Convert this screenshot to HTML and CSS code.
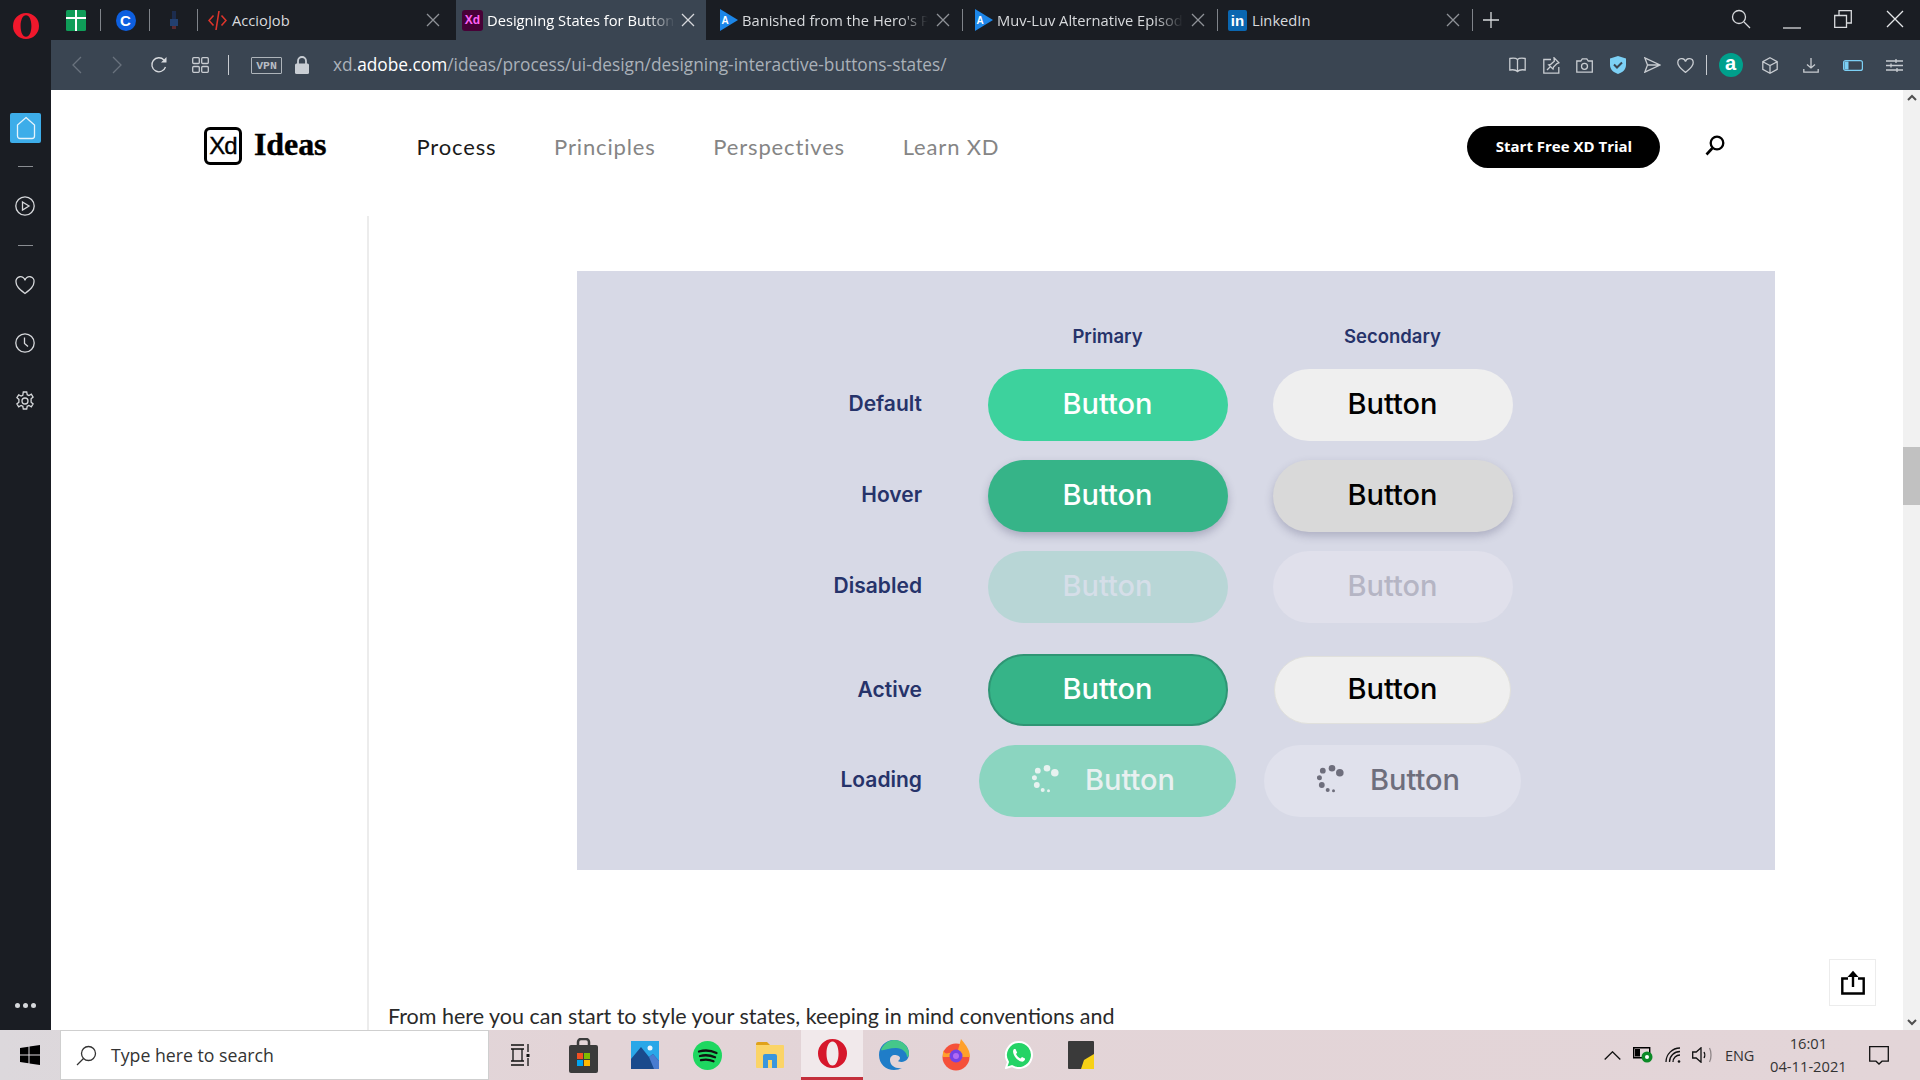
FILE: index.html
```html
<!DOCTYPE html>
<html lang="en">
<head>
<meta charset="utf-8">
<title>Designing States for Buttons</title>
<link rel="stylesheet" href="styles.css">
</head>
<body>
<div class="upper">
  <aside class="sidebar">
    <svg class="opera-logo" width="26" height="26" viewBox="0 0 26 26"><path fill="#f0182c" fill-rule="evenodd" d="M13 0a13 13 0 1 1 0 26a13 13 0 0 1 0-26zM13 2.2c-3.3 0-5.4 4.6-5.4 10.8S9.700 23.800 13 23.800 18.400 19.200 18.400 13 16.300 2.200 13 2.200z"/></svg>
    <div class="side-home"><svg class="ic" width="20" height="24" viewBox="0 0 20 24"><path d="M10 1.500L18.500 9v11a2.500 2.500 0 0 1-2.500 2.500H4A2.500 2.500 0 0 1 1.500 20V9z"/></svg></div>
    <div class="side-rule rule-a"></div>
    <svg class="ic side-play" width="20" height="20" viewBox="0 0 20 20"><circle cx="10" cy="10" r="9.200"/><path d="M7.500 6l6.500 4-6.500 4z"/></svg>
    <div class="side-rule rule-b"></div>
    <svg class="ic side-heart" width="20" height="20" viewBox="0 0 20 20"><path d="M10 18.500C5 14.500 1 11.500 1 7a4.500 4.500 0 0 1 9-1.500A4.500 4.500 0 0 1 19 7c0 4.500-4 7.500-9 11.500z"/></svg>
    <svg class="ic side-clock" width="20" height="20" viewBox="0 0 20 20"><circle cx="10" cy="10" r="9.200"/><path d="M9.500 4.500v6l3.500 3"/></svg>
    <svg class="ic side-gear" width="20" height="20" viewBox="0 0 20 20"><circle cx="10" cy="10" r="3"/><path d="M8.300 1h3.400l.5 2.700 1.700.8 2.400-1.300 1.800 2.900-2 1.700v3.400l2 1.700-1.800 2.900-2.400-1.300-1.700.8-.5 2.700H8.300l-.5-2.700-1.700-.8-2.400 1.300-1.800-2.900 2-1.700V8.400l-2-1.700 1.800-2.900 2.400 1.300 1.700-.8z"/></svg>
    <div class="side-dots"><i></i><i></i><i></i></div>
  </aside>

  <div class="browser">
    <div class="tabbar">
      <div class="pin pin-a"><svg width="20" height="21" viewBox="0 0 20 21"><rect width="20" height="21" rx="1.500" fill="#0f9d58"/><path d="M9 0h2v7h9v2h-9v12H9V9H0V7h9z" fill="#fff"/></svg></div>
      <span class="sep"></span>
      <div class="pin pin-b"><span class="ico-c">C</span></div>
      <span class="sep"></span>
      <div class="pin pin-c"><svg width="8" height="18" viewBox="0 0 8 18"><rect x="2" y="0" width="4" height="9" fill="#1c2c4e"/><rect x="0" y="8" width="8" height="7" fill="#23406f"/><rect x="2" y="15" width="4" height="3" fill="#5a2a30"/></svg></div>
      <span class="sep"></span>
      <div class="tab tab-accio"><svg class="ico-code" width="19" height="21" viewBox="0 0 19 21"><path d="M5.500 5.500L1 10.500l4.500 5M13.500 5.500L18 10.500l-4.500 5M11 1L8 20" fill="none" stroke="#dd352c" stroke-width="1.600"/></svg><span class="tab-title">AccioJob</span><svg class="ic close" width="14" height="14" viewBox="0 0 14 14"><path d="M1 1l12 12M13 1L1 13"/></svg></div>
      <div class="tab tab-active"><span class="ico-xd">Xd</span><span class="tab-title fade">Designing States for Button</span><svg class="ic close" width="14" height="14" viewBox="0 0 14 14"><path d="M1 1l12 12M13 1L1 13"/></svg></div>
      <div class="tab tab-hero"><svg class="ico-ani" width="18" height="22" viewBox="0 0 18 22"><path d="M0 0l18 11L0 22z" fill="#1c86e8"/><text x="1.500" y="15" class="ani-letter">A</text></svg><span class="tab-title fade">Banished from the Hero's P</span><svg class="ic close" width="14" height="14" viewBox="0 0 14 14"><path d="M1 1l12 12M13 1L1 13"/></svg></div>
      <span class="sep"></span>
      <div class="tab tab-muv"><svg class="ico-ani" width="18" height="22" viewBox="0 0 18 22"><path d="M0 0l18 11L0 22z" fill="#1c86e8"/><text x="1.500" y="15" class="ani-letter">A</text></svg><span class="tab-title fade">Muv-Luv Alternative Episod</span><svg class="ic close" width="14" height="14" viewBox="0 0 14 14"><path d="M1 1l12 12M13 1L1 13"/></svg></div>
      <span class="sep"></span>
      <div class="tab tab-in"><span class="ico-in">in</span><span class="tab-title">LinkedIn</span><svg class="ic close" width="14" height="14" viewBox="0 0 14 14"><path d="M1 1l12 12M13 1L1 13"/></svg></div>
      <span class="sep"></span>
      <svg class="ic tab-plus" width="16" height="16" viewBox="0 0 16 16"><path d="M8 0v16M0 8h16"/></svg>
      <svg class="ic win-search" width="20" height="20" viewBox="0 0 20 20"><circle cx="8" cy="8" r="6.500"/><path d="M13 13l6 6"/></svg>
      <svg class="ic win-min" width="18" height="18" viewBox="0 0 18 18"><path d="M0 17h18"/></svg>
      <svg class="ic win-max" width="18" height="18" viewBox="0 0 18 18"><path d="M.700 5.500h11.800v11.800H.700zM5 5.500V.700h12.300v12.300h-4.800"/></svg>
      <svg class="ic win-close" width="18" height="18" viewBox="0 0 18 18"><path d="M1 1l16 16M17 1L1 17"/></svg>
    </div>

    <div class="toolbar">
      <svg class="ic tb tb-back" width="12" height="18" viewBox="0 0 12 18"><path d="M10 1L2 9l8 8"/></svg>
      <svg class="ic tb tb-fwd" width="12" height="18" viewBox="0 0 12 18"><path d="M2 1l8 8-8 8"/></svg>
      <svg class="ic tb tb-reload" width="18" height="18" viewBox="0 0 18 18"><path d="M15.500 11a7 7 0 1 1-1.500-7"/><path class="solid" d="M16.500 1v5.500H11z"/></svg>
      <svg class="ic tb tb-grid" width="17" height="16" viewBox="0 0 17 16"><rect x=".700" y=".700" width="6.600" height="5.800" rx="1"/><rect x="9.700" y=".700" width="6.600" height="5.800" rx="1"/><rect x=".700" y="9.500" width="6.600" height="5.800" rx="1"/><rect x="9.700" y="9.500" width="6.600" height="5.800" rx="1"/></svg>
      <span class="tb-sep"></span>
      <span class="vpn">VPN</span>
      <svg class="tb-lock" width="14" height="18" viewBox="0 0 14 18"><path d="M3 8V5a4 4 0 0 1 8 0v3" fill="none" stroke="#c9ced4" stroke-width="1.800"/><rect y="7.500" width="14" height="10.500" rx="1.500" fill="#c9ced4"/></svg>
      <div class="url">xd.<b>adobe.com</b>/ideas/process/ui-design/designing-interactive-buttons-states/</div>
      <div class="tb-right">
        <svg class="ic" width="17" height="16" viewBox="0 0 17 16"><path d="M8.500 2.500C7 1 4 1 .8 1.500v11.500c3-.5 6-.5 7.700 1.500 1.700-2 4.700-2 7.700-1.500V1.500C13 1 10 1 8.500 2.500zM8.500 2.500v12"/></svg>
        <svg class="ic" width="17" height="17" viewBox="0 0 17 17"><path d="M8 2.500H.8v13.700h15V10"/><path d="M11 .8l5 5-2 .8-3.500 3.500-.5 2-4.300-4.300 2-.5L11.300 4.300zM7.500 9.500l-3.500 3.500"/></svg>
        <svg class="ic" width="17" height="15" viewBox="0 0 17 15"><path d="M.8 3h4l1.500-2.200h4.500L12.300 3h4v11.200H.8z"/><circle cx="8.500" cy="8.300" r="3"/></svg>
        <svg width="16" height="18" viewBox="0 0 16 18"><path d="M8 0l8 2.500V9c0 4.500-3.500 7.500-8 9-4.500-1.500-8-4.500-8-9V2.500z" fill="#7cd0f5"/><path d="M4 8.500l3 3 5-5" fill="none" stroke="#3a4552" stroke-width="2"/></svg>
        <svg class="ic" width="17" height="16" viewBox="0 0 17 16"><path d="M.8 .8L16 8 .8 15.200 3.500 8zM3.500 8H16"/></svg>
        <svg class="ic" width="17" height="15" viewBox="0 0 17 15"><path d="M8.500 14.500C4.500 11 .8 8.500 .8 4.700a3.900 3.900 0 0 1 7.700-1 3.900 3.900 0 0 1 7.700 1c0 3.800-3.700 6.300-7.700 9.800z"/></svg>
        <span class="tb-sep"></span>
        <span class="ico-a">a</span>
        <svg class="ic" width="16" height="17" viewBox="0 0 16 17"><path d="M8 .8l7.200 3.900v7.600L8 16.200 .8 12.300V4.700zM.8 4.700L8 8.500l7.200-3.800M8 8.500v7.700"/></svg>
        <svg class="ic" width="16" height="16" viewBox="0 0 16 16"><path d="M8 1v10M4 7.500L8 11l4-3.500M.8 12v3.200h14.400V12"/></svg>
        <svg width="20" height="11" viewBox="0 0 20 11"><rect x=".6" y=".6" width="18.800" height="9.800" rx="2" fill="none" stroke="#7cd0f5" stroke-width="1.200"/><rect x="1.500" y="1.500" width="4" height="8" fill="#7cd0f5"/></svg>
        <svg class="ic" width="17" height="15" viewBox="0 0 17 15"><path d="M0 3h17M0 7.500h17M0 12h17M10 1v4M5 5.500v4M11 10v4"/></svg>
      </div>
    </div>

    <div class="viewport">
      <main class="page">
        <header class="nav">
          <a class="logo"><span class="logo-box">Xd</span><span class="logo-name">Ideas</span></a>
          <nav class="links">
            <span class="link current">Process</span>
            <span class="link">Principles</span>
            <span class="link">Perspectives</span>
            <span class="link">Learn XD</span>
          </nav>
          <span class="cta">Start Free XD Trial</span>
          <svg class="nav-search" width="20" height="21" viewBox="0 0 20 21"><circle cx="12" cy="8" r="6.300" fill="none" stroke="#000" stroke-width="2.300"/><path d="M7.500 13L1.500 19.500" stroke="#000" stroke-width="2.600" fill="none"/></svg>
        </header>
        <article class="article">
          <figure class="panel">
            <span></span><span class="col-head">Primary</span><span class="col-head">Secondary</span>
            <span class="row-label">Default</span><span class="btn p-default">Button</span><span class="btn s-default">Button</span>
            <span class="row-label">Hover</span><span class="btn p-hover">Button</span><span class="btn s-hover">Button</span>
            <span class="row-label">Disabled</span><span class="btn p-disabled">Button</span><span class="btn s-disabled">Button</span>
            <span class="row-label">Active</span><span class="btn p-active">Button</span><span class="btn s-active">Button</span>
            <span class="row-label">Loading</span>
            <span class="btn loading p-loading"><svg width="27" height="28" viewBox="0 0 27 28"><g fill="#e8f2f0"><circle cx="22.800" cy="7.700" r="3.800"/><circle cx="15" cy="3.300" r="3.300"/><circle cx="5.800" cy="5.700" r="2.900"/><circle cx="2.400" cy="12.700" r="2.500"/><circle cx="4.800" cy="20" r="2.900"/><circle cx="10.700" cy="25" r="2"/><circle cx="16.500" cy="25.700" r="1.500"/></g></svg>Button</span>
            <span class="btn loading s-loading"><svg width="27" height="28" viewBox="0 0 27 28"><g fill="#6e6e7c"><circle cx="22.800" cy="7.700" r="3.800"/><circle cx="15" cy="3.300" r="3.300"/><circle cx="5.800" cy="5.700" r="2.900"/><circle cx="2.400" cy="12.700" r="2.500"/><circle cx="4.800" cy="20" r="2.900"/><circle cx="10.700" cy="25" r="2"/><circle cx="16.500" cy="25.700" r="1.500"/></g></svg>Button</span>
          </figure>
          <p class="body-text">From here you can start to style your states, keeping in mind conventions and</p>
        </article>
        <div class="share"><svg width="24" height="25" viewBox="0 0 24 25"><path d="M7 8.500H1.300v15h21.400v-15H17" fill="none" stroke="#000" stroke-width="2.400"/><path d="M12 17V3" stroke="#000" stroke-width="2.400"/><path d="M6.500 7L12 .8 17.500 7z" fill="#000"/></svg></div>
      </main>
      <div class="scrollbar">
        <svg class="sb-arrow" width="10" height="7" viewBox="0 0 10 7"><path d="M1 6l4-4 4 4" fill="none" stroke="#505050" stroke-width="2"/></svg>
        <div class="sb-thumb"></div>
        <svg class="sb-arrow sb-down" width="10" height="7" viewBox="0 0 10 7"><path d="M1 1l4 4 4-4" fill="none" stroke="#505050" stroke-width="2"/></svg>
      </div>
    </div>
  </div>
</div>

<footer class="taskbar">
  <svg class="win-logo" width="20" height="20" viewBox="0 0 20 20"><path d="M0 3l8.500-1.300v7.800H0zM9.500 1.500L20 0v9.500H9.500zM0 10.500h8.500v7.800L0 17zM9.500 10.500H20V20L9.500 18.500z" fill="#000"/></svg>
  <div class="searchbox">
    <svg class="ic" width="21" height="21" viewBox="0 0 21 21"><circle cx="12.500" cy="8.500" r="7"/><path d="M7.500 13.500L1 20"/></svg>
    <span>Type here to search</span>
  </div>
  <div class="apps">
    <div class="app"><svg class="ic dark" width="20" height="22" viewBox="0 0 20 22"><path d="M0 1h13M0 21h13M0 17h13M2 5h9v12H2zM0 5h13M17 0v8M17 14v8"/><path d="M15.500 10h3v3h-3z" class="solid"/></svg></div>
    <div class="app"><svg width="29" height="35" viewBox="0 0 29 35"><path d="M9 8V4a3 3 0 0 1 3-3h5a3 3 0 0 1 3 3v4" fill="none" stroke="#3b3b3b" stroke-width="2.500"/><rect y="7" width="29" height="28" rx="2" fill="#3b3b3b"/><rect x="8" y="15" width="6" height="6" fill="#f25022"/><rect x="15" y="15" width="6" height="6" fill="#7fba00"/><rect x="8" y="22" width="6" height="6" fill="#00a4ef"/><rect x="15" y="22" width="6" height="6" fill="#ffb900"/></svg></div>
    <div class="app"><svg width="28" height="28" viewBox="0 0 28 28"><rect width="28" height="28" fill="#2aa7e8"/><circle cx="19" cy="7" r="2.500" fill="#e8f6ff"/><path d="M0 28V18L10 6l8 10 4-3 6 7v8z" fill="#1a4a8c"/><path d="M18 16l4-3 6 7v8h-5z" fill="#4a7cd0"/></svg></div>
    <div class="app"><svg width="29" height="29" viewBox="0 0 29 29"><circle cx="14.500" cy="14.500" r="14.500" fill="#1ed760"/><path d="M6 10.500c6-1.700 12-1.200 17.500 1.500M7 15c5-1.300 10-1 15 1.300M8 19.200c4-1 8.500-.8 12.500 1.100" fill="none" stroke="#111" stroke-width="2.300" stroke-linecap="round"/></svg></div>
    <div class="app"><svg width="28" height="26" viewBox="0 0 28 26"><path d="M0 2a2 2 0 0 1 2-2h9l3 3H0z" fill="#e0a21b"/><rect y="3" width="28" height="23" rx="1" fill="#fbd467"/><path d="M7 26V14a2 2 0 0 1 2-2h10a2 2 0 0 1 2 2v12h-5v-8h-4v8z" fill="#3a96dd"/></svg></div>
    <div class="app app-active"><svg width="29" height="29" viewBox="0 0 26 26"><path fill="#d6172b" fill-rule="evenodd" d="M13 0a13 13 0 1 1 0 26a13 13 0 0 1 0-26zM13 2.200c-3.300 0-5.400 4.600-5.400 10.800S9.700 23.800 13 23.800 18.400 19.200 18.400 13 16.300 2.200 13 2.200z"/></svg></div>
    <div class="app"><svg width="30" height="30" viewBox="0 0 30 30"><path d="M15 0C6 0 0 7 0 15c0 9 7 15 15 15 3 0 6-1 8-2-6 1-12-2-12-8 0-3 2-5 5-5 2 0 5 1 5 3s-2 3-2 3 3 2 7 0 4-6 4-8C30 6 23 0 15 0z" fill="#1f7dc8"/><path d="M2 10c2-6 8-10 13-10 8 0 15 6 15 14 0 2-1 3-2 3 0-5-5-9-11-9-7 0-12 3-15 2z" fill="#45c78a"/></svg></div>
    <div class="app"><svg width="30" height="32" viewBox="0 0 30 32"><circle cx="15" cy="18" r="13.500" fill="#f5503a"/><path d="M2 11c1 3 3 4 6 3 3-1 6 0 9-3l3-11c2 3 9 9 9 18H2z" fill="#ffa02b"/><circle cx="15" cy="17" r="6.500" fill="#7542e5"/><circle cx="15" cy="17" r="3" fill="#b26bf3"/></svg></div>
    <div class="app"><svg width="28" height="28" viewBox="0 0 28 28"><path d="M14 1a13 13 0 0 0-11 20l-2 6 6-2A13 13 0 1 0 14 1z" fill="#25d366" stroke="#fff" stroke-width="2"/><path d="M9 8c-1 1-1.500 3 0 6s4 5.500 7 6.500c2 .5 3.500-.5 4-2v-1l-3-1.500-1.500 1.500c-2-.8-3.500-2.300-4.500-4.500l1.200-1.300L10.500 8z" fill="#fff"/></svg></div>
    <div class="app"><svg width="26" height="28" viewBox="0 0 26 28"><rect width="26" height="28" rx="1" fill="#3a3a3a"/><path d="M13 28l3-9 10-6v15z" fill="#f7d117"/></svg></div>
  </div>
  <div class="tray">
    <svg class="ic dark tray-caret" width="17" height="9" viewBox="0 0 17 9"><path d="M.7 8.500L8.500 .8l7.800 7.700"/></svg>
    <svg class="tray-batt" width="20" height="16" viewBox="0 0 20 16"><path d="M.7 .7h16v10H.7z" fill="none" stroke="#000" stroke-width="1.400"/><rect x="2" y="2" width="5" height="7.500" fill="#000"/><circle cx="14" cy="10" r="5.500" fill="#0d8a27"/><circle cx="14" cy="10" r="2" fill="#fff"/></svg>
    <svg class="ic dark tray-wifi" width="17" height="16" viewBox="0 0 17 16"><path d="M1 15A14 14 0 0 1 15 1M4.500 15A10.500 10.500 0 0 1 15 4.500M8 15a7 7 0 0 1 7-7"/><circle class="solid" cx="14" cy="14.500" r="1.300"/></svg>
    <svg class="ic dark tray-vol" width="20" height="16" viewBox="0 0 20 16"><path d="M.7 5h3.500L9 .8v14.400L4.200 11H.7z"/><path d="M12 5c1 1.500 1 4.500 0 6"/><path class="faint" d="M17.500 1c2 3.500 2 10.500 0 14"/></svg>
    <span class="tray-lang">ENG</span>
    <div class="clock"><span>16:01</span><span>04-11-2021</span></div>
    <svg class="ic dark tray-note" width="20" height="19" viewBox="0 0 20 19"><path d="M.7 .7h18.600v14.500H13L10 18l-3-2.800H.7z"/></svg>
  </div>
</footer>
</body>
</html>
```
FILE: styles.css
```css
* { box-sizing: border-box; }
html, body { margin: 0; padding: 0; }
body {
  width: 1920px;
  height: 1080px;
  overflow: hidden;
  display: flex;
  flex-direction: column;
  font-family: "Open Sans", "Noto Sans", sans-serif;
  background: #fff;
}
svg { display: block; flex: none; }
.ic { fill: none; stroke: currentColor; stroke-width: 1.3; }
.ic .solid { fill: currentColor; stroke: none; }
.ic .faint { opacity: .4; }
.dark { color: #111; }

.upper { flex: none; height: 1030px; display: flex; }

/* sidebar */
.sidebar {
  flex: none;
  width: 51px;
  height: 1030px;
  padding-right: 1px;
  background: #1a1d23;
  color: #d6d8db;
  display: flex;
  flex-direction: column;
  align-items: center;
}
.opera-logo { margin-top: 13px; margin-left: 1px; }
.side-home {
  margin-top: 74px;
  margin-left: 1px;
  width: 31px;
  height: 30px;
  border-radius: 2px;
  background: #3dade9;
  color: #e6f4fc;
  display: flex;
  align-items: center;
  justify-content: center;
}
.side-rule { width: 15px; height: 1px; background: #8a8d92; }
.rule-a { margin-top: 23px; }
.side-play { margin-top: 29px; }
.rule-b { margin-top: 29px; }
.side-heart { margin-top: 29px; }
.side-clock { margin-top: 38px; }
.side-gear { margin-top: 38px; }
.side-dots { margin-top: auto; margin-bottom: 22px; margin-left: 1px; display: flex; gap: 3px; }
.side-dots i { width: 5px; height: 5px; border-radius: 50%; background: #d6d8db; }

/* right column */
.browser { flex: 1; min-width: 0; display: flex; flex-direction: column; }

.tabbar {
  flex: none;
  height: 40px;
  background: #1a1d23;
  display: flex;
  align-items: center;
  color: #d8dadd;
  font-size: 14.700px;
}
.sep { flex: none; width: 1px; height: 22px; background: #80848a; }
.pin { flex: none; height: 40px; display: flex; align-items: center; }
.pin-a { width: 48.500px; padding-left: 15px; }
.pin-b { width: 48.500px; padding-left: 15px; }
.pin-c { width: 47px; padding-left: 20px; }
.ico-c {
  width: 20px; height: 21px; border-radius: 50%;
  background: #0d5fe0; color: #fff;
  font: bold 15px/21px "Liberation Sans", sans-serif;
  text-align: center;
}
.tab { flex: none; height: 40px; display: flex; align-items: center; }
.tab-title { flex: 1; min-width: 0; white-space: nowrap; line-height: 40px; }
.fade { -webkit-mask-image: linear-gradient(90deg, #000 85%, transparent 100%); mask-image: linear-gradient(90deg, #000 85%, transparent 100%); }
.close { color: #8f9297; margin-left: 8px; }
.tab-accio { width: 258px; padding: 0 16px 0 10px; }
.ico-code { margin-right: 5px; }
.tab-active { width: 250px; padding: 0 11px 0 6px; background: #3a4552; color: #fff; }
.tab-active .close { color: #d6d8db; margin-left: 6px; }
.ico-xd {
  flex: none; width: 21px; height: 21px; margin-right: 4px; border-radius: 3px;
  background: #470137; color: #ff61f6;
  font: bold 12px/21px "Liberation Sans", sans-serif; text-align: center;
}
.tab-hero { width: 256px; padding: 0 12px 0 14px; }
.tab-muv { width: 254px; padding: 0 12px 0 12px; }
.ico-ani { margin-right: 4px; }
.ani-letter { font: bold 10px "Liberation Sans", sans-serif; fill: #fff; }
.tab-in { width: 254px; padding: 0 12px 0 10px; }
.ico-in {
  flex: none; width: 19px; height: 21px; margin-right: 5px; border-radius: 2px;
  background: #0a66b0; color: #fff;
  font: bold 15px/21px "Liberation Sans", sans-serif; text-align: center;
}
.tab-plus { margin-left: 10px; color: #d8dadd; margin-top: -1px; }
.win-search { margin-left: 232px; color: #d8dadd; margin-top: -3px; }
.win-min { margin-left: 31.500px; color: #d8dadd; }
.win-max { margin-left: 33px; color: #d8dadd; margin-top: -2px; }
.win-close { margin-left: 34px; color: #e4e6e8; margin-top: -2px; }

/* toolbar */
.toolbar {
  flex: none;
  height: 50px;
  background: #3a4552;
  display: flex;
  align-items: center;
  color: #c8ccd1;
}
.tb-back { margin-left: 20px; color: #69727d; }
.tb-fwd { margin-left: 28px; color: #69727d; }
.tb-reload { margin-left: 27px; color: #d8dbdf; }
.tb-grid { margin-left: 24px; color: #c8ccd1; }
.toolbar > .tb-sep { margin-left: 19px; }
.tb-sep { flex: none; width: 1px; height: 20px; background: #c8ccd1; }
.vpn {
  flex: none; margin-left: 22px; width: 31px; height: 17px;
  border: 1px solid #aeb4ba; border-radius: 1px;
  color: #b8bdc3; font: bold 11.500px/15px "Liberation Mono", monospace; text-align: center;
}
.tb-lock { margin-left: 13px; }
.url { margin-left: 24px; margin-top: -2px; font-size: 17.300px; color: #aab1b9; white-space: nowrap; }
.url b { font-weight: 400; color: #fff; }
.tb-right { margin-left: auto; margin-right: 17.500px; display: flex; align-items: center; }
.tb-right > :nth-child(2) { margin-left: 17px; }
.tb-right > :nth-child(3) { margin-left: 16px; }
.tb-right > :nth-child(4) { margin-left: 17.500px; }
.tb-right > :nth-child(5) { margin-left: 17.500px; }
.tb-right > :nth-child(6) { margin-left: 16px; }
.tb-right > :nth-child(7) { margin-left: 12px; }
.tb-right > :nth-child(8) { margin-left: 12px; }
.tb-right > :nth-child(9) { margin-left: 19.500px; }
.tb-right > :nth-child(10) { margin-left: 25px; }
.tb-right > :nth-child(11) { margin-left: 24px; }
.tb-right > :nth-child(12) { margin-left: 22.500px; }
.ico-a {
  flex: none;
  width: 24px; height: 24px; border-radius: 50%;
  background: #00a08c; color: #fff; text-align: center;
  font: bold 20px/20px "Liberation Sans", sans-serif;
}

/* viewport */
.viewport { flex: 1; min-height: 0; display: flex; }
.page { position: relative; flex: 1; min-width: 0; display: flex; flex-direction: column; background: #fff; }

.nav { flex: none; height: 114px; display: flex; align-items: center; padding-left: 153px; }
.logo { display: flex; align-items: center; gap: 12px; margin-top: -2px; }
.logo-box {
  width: 38px; height: 38px; border: 3px solid #000; border-radius: 6px;
  font: 24px/32px "Liberation Sans Narrow", "Liberation Sans", sans-serif; letter-spacing: -1px; text-align: center; color: #000;
  -webkit-text-stroke: .4px #000;
}
.logo-name { font: bold 32px/34px "Liberation Serif", serif; padding-bottom: 4px; color: #000; letter-spacing: -.1px; -webkit-text-stroke: .4px #000; }
.links { margin-left: 90px; display: flex; gap: 57.700px; }
.link { font: 22px/28px "Lato", sans-serif; letter-spacing: .85px; color: #858585; }
.current { color: #1a1a1a; }
.cta {
  margin-left: 468px;
  width: 193px; height: 42px; border-radius: 21px;
  background: #000; color: #fff;
  font: 700 15px/41px "Open Sans", sans-serif; text-align: center;
}
.nav-search { margin-left: 45px; margin-top: -3px; }

.article {
  flex: 1; min-height: 0; overflow: hidden;
  margin: 12px 0 0 316px;
  border-left: 2px solid #ececec;
}
.panel {
  margin: 55px 0 0 208px;
  width: 1198px;
  height: 599px;
  padding-top: 53px;
  background: #d7d9e6;
  display: grid;
  font-family: "Inter", sans-serif;
  grid-template-columns: 402px 257px 28px 257px;
  grid-template-rows: 26px 72px 72px 72px 84px 72px;
  row-gap: 19px;
  justify-content: start;
}
.panel > :nth-child(3n+1) { grid-column: 1; }
.panel > :nth-child(3n+2) { grid-column: 2; }
.panel > :nth-child(3n) { grid-column: 4; }
.col-head { font-size: 18.500px; font-weight: 600; line-height: 24px; color: #26336a; text-align: center; }
.row-label { font-size: 21px; font-weight: 600; color: #26336a; text-align: right; padding: 0 57px 3px 0; align-self: center; }
.btn {
  width: 240px; height: 72px; border-radius: 36px;
  justify-self: center;
  display: flex; align-items: center; justify-content: center;
  padding-bottom: 4px;
  font-size: 29px; font-weight: 500;
}
.p-default { background: #3dd29d; color: #fff; }
.s-default { background: #efefef; color: #000; }
.p-hover { background: #36b488; color: #fff; box-shadow: 0 4px 9px rgba(50, 50, 90, .28); }
.s-hover { background: #d9d9d9; color: #000; box-shadow: 0 4px 9px rgba(50, 50, 90, .25); }
.p-disabled { background: #b8d6d6; color: #d5dee8; }
.s-disabled { background: #e0e0eb; color: #b5b5c4; }
.p-active { background: #36b488; color: #fff; border: 2px solid #2f9574; align-self: end; }
.s-active { background: #efefef; color: #000; border: 1px solid #e0e0dc; width: 237px; height: 68px; align-self: end; margin-bottom: 2px; }
.row-label:nth-child(13) { align-self: end; padding-bottom: 24px; }
.loading { width: 257px; gap: 26px; padding-right: 8px; }
.p-loading { background: #8bd5c0; color: #e8f0f0; }
.s-loading { background: #e0e1ec; color: #6e6e7c; }

.body-text {
  margin: 131px 0 0 19px;
  font: 21.500px/30px "Lato", sans-serif;
  color: #2a2a2a;
  white-space: nowrap;
}
.share {
  position: absolute;
  right: 27px;
  bottom: 24px;
  width: 47px; height: 47px;
  border: 1px solid #ececec;
  background: #fff;
  display: flex; align-items: center; justify-content: center;
}

.scrollbar { flex: none; width: 17px; background: #f1f1f1; display: flex; flex-direction: column; align-items: center; padding-top: 4px; }
.sb-thumb { width: 17px; height: 58px; margin-top: 346px; background: #c1c1c1; }
.sb-down { margin-top: auto; margin-bottom: 4px; }

/* taskbar */
.taskbar {
  flex: none;
  height: 50px;
  display: flex;
  align-items: center;
  background: linear-gradient(90deg, #dcd8dc 0, #e3d4d7 30%, #e3d5d8 100%);
  color: #111;
}
.win-logo { margin-left: 20px; }
.searchbox {
  margin-left: 20px;
  width: 429px;
  height: 50px;
  background: #fff;
  border: 1px solid #cfcfcf;
  display: flex; align-items: center;
  padding-left: 15px;
  gap: 14px;
  font-size: 17.700px;
  color: #333;
}
.apps { display: flex; height: 50px; margin-left: 1px; margin-right: 492px; }
.app { flex: none; width: 62.200px; height: 50px; display: flex; align-items: center; justify-content: center; }
.app-active { background: #f1e9eb; border-bottom: 3px solid #c4303c; }
.tray { display: flex; align-items: center; height: 50px; }
.tray-batt { margin-left: 12px; }
.tray-wifi { margin-left: 12px; }
.tray-vol { margin-left: 10px; }
.tray-lang { margin-left: 13px; font-size: 14.500px; color: #333; }
.clock { width: 110px; margin-left: -1px; display: flex; flex-direction: column; align-items: center; font-size: 14.700px; line-height: 23px; color: #333; }
.tray-note { margin-left: 6px; }
```
